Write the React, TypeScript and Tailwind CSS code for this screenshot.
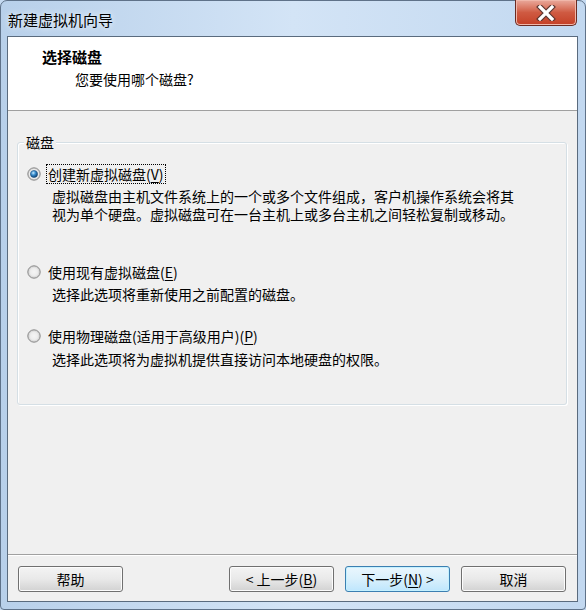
import React from "react";

function Radio({ checked, id }: { checked: boolean; id: string }) {
  return (
    <svg width="14" height="14" viewBox="0 0 14 14" className="shrink-0">
      <defs>
        <radialGradient id={`rg-${id}`} cx="50%" cy="50%" r="55%">
          <stop offset="0%" stopColor="#ffffff" />
          <stop offset="60%" stopColor="#e6e6e6" />
          <stop offset="100%" stopColor="#c4c4c4" />
        </radialGradient>
        <radialGradient id={`dot-${id}`} cx="40%" cy="35%" r="65%">
          <stop offset="0%" stopColor="#c9ecff" />
          <stop offset="45%" stopColor="#3a8fd0" />
          <stop offset="100%" stopColor="#0b3f72" />
        </radialGradient>
      </defs>
      <circle cx="7" cy="7" r="6.2" fill={`url(#rg-${id})`} stroke="#8b8b8b" strokeWidth="1" />
      {checked ? (
        <>
          <circle cx="7" cy="7" r="4.6" fill="#f7f7f7" />
          <circle cx="7" cy="7" r="3.6" fill={`url(#dot-${id})`} stroke="#1f4f7c" strokeWidth="0.6" />
        </>
      ) : (
        <circle cx="7" cy="7" r="4" fill="#efefef" opacity="0.6" />
      )}
    </svg>
  );
}

function Btn({ children, def }: { children: React.ReactNode; def?: boolean }) {
  return (
    <div
      className={
        def
          ? "w-[105px] h-[26px] flex items-center justify-center rounded-[3px] border border-[#3c7fb1] bg-gradient-to-b from-[#eaf6fd] via-[#d9f0fc] to-[#bee6fd] shadow-[inset_0_0_0_1px_#c4f1ff] text-[14px] leading-[18px]"
          : "w-[105px] h-[26px] flex items-center justify-center rounded-[3px] border border-[#707070] bg-gradient-to-b from-[#f4f4f4] via-[#e9e9e9] to-[#d2d2d2] shadow-[inset_0_0_0_1px_#fcfcfc] text-[14px] leading-[18px]"
      }
    >
      {children}
    </div>
  );
}

export default function App() {
  return (
    <div className="relative w-[586px] h-[610px] overflow-hidden font-['Noto_Sans_CJK_SC',sans-serif] text-black bg-[#c5daf1]">
      <div className="w-full h-full flex flex-col rounded-t-[7px] rounded-b-[4px] border border-[#5f7289] bg-gradient-to-r from-[#b8d0ea] via-[#d3e4f6] to-[#c2d8f0] pl-[6px] pr-[7px] pb-[7px]">
        <div className="h-[35px] shrink-0 flex items-center pl-[1px] pt-[3px] text-[15px] leading-[20px] [text-shadow:0_0_6px_#ffffff]">
          新建虚拟机向导
        </div>
        <div className="flex-1 flex flex-col border border-[#5a6b7e] bg-[#f0f0f0]">
          <div className="h-[74px] shrink-0 bg-white border-b border-[#a0a0a0] flex flex-col pt-[10px] pl-[34px]">
            <div className="text-[15px] leading-[20px] font-bold">选择磁盘</div>
            <div className="mt-[2px] ml-[33px] text-[14px] leading-[20px]">您要使用哪个磁盘?</div>
          </div>
          <div className="relative mt-[31px] ml-[9px] mr-[10px] h-[263px] border border-[#d5dfe5] rounded-[3px] shadow-[inset_1px_1px_0_#ffffff,1px_1px_0_#ffffff] flex flex-col pt-[21px] pl-[9px] text-[14px] leading-[18px]">
            <div className="absolute -top-[10px] left-[6px] bg-[#f0f0f0] px-[2px] leading-[18px]">磁盘</div>
            <div className="flex items-center h-[20px]">
              <Radio checked id="a" />
              <span className="ml-[5px] px-[1px] border border-dotted border-black leading-[18px]">
                创建新虚拟磁盘(<span className="underline underline-offset-2">V</span>)
              </span>
            </div>
            <div className="mt-[3px] ml-[25px]">
              <div>虚拟磁盘由主机文件系统上的一个或多个文件组成，客户机操作系统会将其</div>
              <div>视为单个硬盘。虚拟磁盘可在一台主机上或多台主机之间轻松复制或移动。</div>
            </div>
            <div className="flex items-center h-[20px] mt-[39px]">
              <Radio checked={false} id="b" />
              <span className="ml-[6px] px-[1px] leading-[18px]">
                使用现有虚拟磁盘(<span className="underline underline-offset-2">E</span>)
              </span>
            </div>
            <div className="mt-[3px] ml-[25px]">选择此选项将重新使用之前配置的磁盘。</div>
            <div className="flex items-center h-[20px] mt-[23px]">
              <Radio checked={false} id="c" />
              <span className="ml-[6px] px-[1px] leading-[18px]">
                使用物理磁盘(适用于高级用户)(<span className="underline underline-offset-2">P</span>)
              </span>
            </div>
            <div className="mt-[4px] ml-[25px]">选择此选项将为虚拟机提供直接访问本地硬盘的权限。</div>
          </div>
          <div className="flex-1" />
          <div className="border-t border-[#a0a0a0] shadow-[inset_0_1px_0_#ffffff] flex items-center pt-[11px] pb-[9px] pl-[10px] pr-[11px]">
            <Btn>帮助</Btn>
            <div className="flex-1" />
            <div className="flex gap-[11px]">
              <Btn>
                &lt; 上一步(<span className="underline underline-offset-2">B</span>)
              </Btn>
              <Btn def>
                下一步(<span className="underline underline-offset-2">N</span>) &gt;
              </Btn>
              <Btn>取消</Btn>
            </div>
          </div>
        </div>
      </div>
      <div className="absolute top-0 left-[515px] w-[62px] h-[26px] rounded-b-[5px] border border-t-0 border-[#6b2b22] bg-gradient-to-b from-[#e9a99c] via-[#cf5a42] to-[#c43f25] shadow-[inset_0_0_0_1px_#f0b7aa] flex items-center justify-center">
        <svg width="22" height="16" viewBox="0 0 22 16">
          <path d="M5 2 L17 14 M17 2 L5 14" stroke="#5b3530" strokeWidth="5.5" strokeLinecap="square" />
          <path d="M5 2 L17 14 M17 2 L5 14" stroke="#ffffff" strokeWidth="3.2" strokeLinecap="square" />
        </svg>
      </div>
    </div>
  );
}
